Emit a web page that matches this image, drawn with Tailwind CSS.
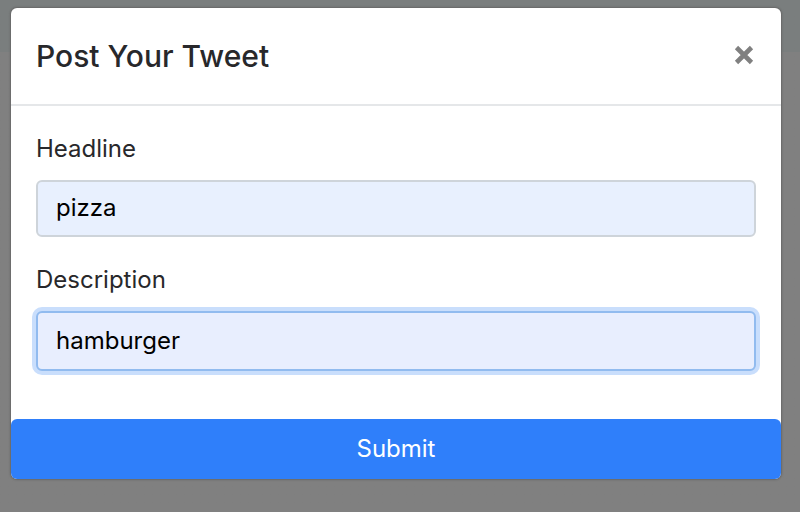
<!DOCTYPE html>
<html lang="en">
<head>
<meta charset="utf-8">
<meta name="viewport" content="width=device-width, initial-scale=1">
<title>Post Your Tweet</title>
<script src="https://cdn.jsdelivr.net/npm/@tailwindcss/browser@4"></script>
</head>
<body class="min-h-screen bg-linear-to-b from-[#7a7e7e] from-[52px] to-[#808080] to-[52px] pt-2 pr-[19px] pb-8 pl-[11px] font-[Inter,sans-serif] text-2xl text-[#28282b]">
<div role="dialog" aria-labelledby="title" class="rounded-md bg-white shadow-[0_0_2px_1px_#666666]">
  <header class="flex items-center justify-between border-b-2 border-[#e5e7e9] px-[25px] pt-[26px] pb-[25px]">
    <h1 id="title" class="text-[30px] leading-[45px] font-medium">Post Your Tweet</h1>
    <button type="button" aria-label="Close" class="flex size-6 items-center justify-center text-[#808080]">
      <svg class="size-6" viewBox="0 0 24 24" fill="none" stroke="currentColor" stroke-width="4.6"><path d="M4.5 2.5 19.5 17.5M19.5 2.5 4.5 17.5"/></svg>
    </button>
  </header>
  <form>
    <div class="flex flex-col px-[25px] pt-6 pb-12">
      <label for="headline" class="mb-3 leading-[38px]">Headline</label>
      <input id="headline" type="text" value="pizza" class="mb-6 h-[57px] w-full rounded-md border-2 border-[#ced4da] bg-[#e8f0fe] px-[18px] pb-0.5 text-black outline-none">
      <label for="description" class="mb-3 leading-[38px]">Description</label>
      <input id="description" type="text" value="hamburger" class="h-[60px] w-full rounded-md border-2 border-[#91bbef] bg-[#e8eefe] px-[18px] pb-0.5 text-black shadow-[0_0_0_4px_#c9defc] outline-none">
    </div>
    <button type="submit" class="block h-[60px] w-full rounded-md bg-[#2f7ffa] text-center text-white">Submit</button>
  </form>
</div>
</body>
</html>
